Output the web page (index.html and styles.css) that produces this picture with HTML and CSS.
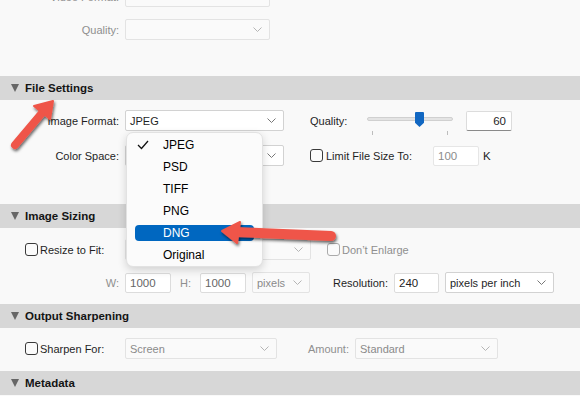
FILE: index.html
```html
<!DOCTYPE html>
<html lang="en">
<head>
    <meta charset="UTF-8">
    <title>Export - File Settings</title>
    <link rel="stylesheet" href="styles.css">
</head>
<body>
    <div class="panel top-part">
        <div class="row">
            <span class="label dim">Video Format:</span>
            <div class="field off w145"><svg class="chev" width="9" height="5"><polyline points="0.5,0.5 4.5,4.5 8.5,0.5"/></svg></div>
        </div>
        <div class="row">
            <span class="label dim">Quality:</span>
            <div class="field off w145"><svg class="chev" width="9" height="5"><polyline points="0.5,0.5 4.5,4.5 8.5,0.5"/></svg></div>
        </div>
    </div>

    <div class="header"><span class="tri"></span>File Settings</div>
    <div class="panel file-settings">
        <div class="row">
            <span class="label">Image Format:</span>
            <div class="field w159">JPEG<svg class="chev" width="9" height="5"><polyline points="0.5,0.5 4.5,4.5 8.5,0.5"/></svg></div>
            <span class="quality-label">Quality:</span>
            <div class="slider">
                <div class="track"></div>
                <div class="thumb"></div>
                <div class="ticks"><span></span><span></span></div>
            </div>
            <div class="input num w46">60</div>
        </div>
        <div class="row">
            <span class="label">Color Space:</span>
            <div class="field w159"><svg class="chev" width="9" height="5"><polyline points="0.5,0.5 4.5,4.5 8.5,0.5"/></svg></div>
            <span class="box limit-box"></span>
            <span class="limit-label">Limit File Size To:</span>
            <div class="input faded w46">100</div>
            <span class="unit">K</span>
        </div>
    </div>

    <div class="header"><span class="tri"></span>Image Sizing</div>
    <div class="panel image-sizing">
        <div class="row">
            <span class="box first-box"></span>
            <span class="check-label">Resize to Fit:</span>
            <div class="field off w186"><svg class="chev" width="9" height="5"><polyline points="0.5,0.5 4.5,4.5 8.5,0.5"/></svg></div>
            <span class="box off enlarge-box"></span>
            <span class="dim">Don’t Enlarge</span>
        </div>
        <div class="row">
            <span class="label dim">W:</span>
            <div class="input grey w46">1000</div>
            <span class="h-label dim">H:</span>
            <div class="input grey w46">1000</div>
            <div class="field off w58 gap6">pixels<svg class="chev" width="9" height="5"><polyline points="0.5,0.5 4.5,4.5 8.5,0.5"/></svg></div>
            <span class="res-label">Resolution:</span>
            <div class="input w45">240</div>
            <div class="field w109 gap6">pixels per inch<svg class="chev" width="9" height="5"><polyline points="0.5,0.5 4.5,4.5 8.5,0.5"/></svg></div>
        </div>
    </div>

    <div class="header"><span class="tri"></span>Output Sharpening</div>
    <div class="panel sharpening">
        <div class="row">
            <span class="box first-box"></span>
            <span class="check-label">Sharpen For:</span>
            <div class="field off w152">Screen<svg class="chev" width="9" height="5"><polyline points="0.5,0.5 4.5,4.5 8.5,0.5"/></svg></div>
            <span class="amount-label dim">Amount:</span>
            <div class="field off w143">Standard<svg class="chev" width="9" height="5"><polyline points="0.5,0.5 4.5,4.5 8.5,0.5"/></svg></div>
        </div>
    </div>

    <div class="header"><span class="tri"></span>Metadata</div>

    <!-- open format list -->
    <div class="menu">
        <div class="item"><span class="mark"><svg width="12" height="10"><polyline points="1,5 4.5,8.5 11,1"/></svg></span>JPEG</div>
        <div class="item"><span class="mark"></span>PSD</div>
        <div class="item"><span class="mark"></span>TIFF</div>
        <div class="item"><span class="mark"></span>PNG</div>
        <div class="item sel"><span class="mark"></span>DNG</div>
        <div class="item"><span class="mark"></span>Original</div>
    </div>

    <!-- callout arrows -->
    <svg class="marks" width="580" height="396">
        <defs>
            <filter id="shadow" x="-30%" y="-30%" width="160%" height="180%">
                <feDropShadow dx="1" dy="2" stdDeviation="1.4" flood-color="#000" flood-opacity="0.6"/>
            </filter>
        </defs>
        <g filter="url(#shadow)" fill="#ef5548" stroke="#ef5548" stroke-linejoin="round">
            <line x1="15" y1="145" x2="42" y2="113" stroke-width="8" stroke-linecap="round"/>
            <polygon points="53,101 50,119 34,106" stroke-width="2"/>
            <line x1="236" y1="232" x2="331" y2="236" stroke-width="10" stroke-linecap="round"/>
            <polygon points="222,231 240,222 237,243" stroke-width="2"/>
        </g>
    </svg>
</body>
</html>
```

FILE: styles.css
```css
* {
    margin: 0;
    padding: 0;
    box-sizing: border-box;
}

body {
    width: 580px;
    height: 396px;
    overflow: hidden;
    position: relative;
    background: #f9f9f9;
    font-family: "Liberation Sans", Arial, sans-serif;
    font-size: 11px;
    color: #1f1f1f;
}

.panel {
    display: flex;
    flex-direction: column;
}

.row {
    display: flex;
    align-items: center;
    height: 21px;
    white-space: nowrap;
}

.dim {
    color: #8f8f8f;
}

.label {
    width: 119px;
    margin-right: 6px;
    text-align: right;
}

/* section headers */
.header {
    height: 24px;
    background: #d7d7d7;
    display: flex;
    align-items: center;
    padding-left: 11px;
    font-weight: bold;
    font-size: 11.5px;
    color: #141414;
}

.tri {
    width: 0;
    height: 0;
    border-left: 4.5px solid transparent;
    border-right: 4.5px solid transparent;
    border-top: 8px solid #666;
    margin-right: 6px;
}

/* drop-down fields */
.field {
    height: 21px;
    display: flex;
    align-items: center;
    padding: 0 7px 0 4px;
    background: #fff;
    border: 1px solid #d2d2d2;
    border-radius: 2px;
}

.field .chev {
    margin-left: auto;
    fill: none;
    stroke: #777;
    stroke-width: 1;
}

.field.off {
    background: #fafafa;
    border-color: #e3e3e3;
    color: #8a8a8a;
}

.field.off .chev {
    stroke: #b5b5b5;
}

.w145 { width: 145px; }
.w159 { width: 159px; }
.w186 { width: 186px; }
.w58 { width: 58px; }
.w109 { width: 109px; }
.w152 { width: 152px; }
.w143 { width: 143px; }
.w46 { width: 46px; }
.w45 { width: 45px; }
.gap6 { margin-left: 6px; }

/* text inputs */
.input {
    height: 20px;
    display: flex;
    align-items: center;
    padding: 0 4px;
    background: #fff;
    border: 1px solid #dcdcdc;
    border-radius: 2px;
    font-size: 11.5px;
}

.input.num {
    justify-content: flex-end;
    padding-right: 5px;
    border-bottom-color: #8a8a8a;
}

.input.faded {
    color: #8c8c8c;
    border-color: #e6e6e6;
}

.input.grey {
    color: #666;
}

/* checkboxes */
.box {
    width: 13px;
    height: 13px;
    border: 1px solid #3a3a3a;
    border-radius: 3px;
    background: #fbfbfb;
}

.box.off {
    border-color: #ababab;
}

.first-box {
    margin-left: 25px;
}

.check-label {
    width: 85px;
    margin-left: 2px;
}

/* file settings */
.top-part {
    margin-top: -14px;
    gap: 12px;
    padding-bottom: 36px;
}

.file-settings {
    padding: 10px 0 38px;
    gap: 14px;
}

.quality-label {
    margin-left: 26px;
    width: 57px;
}

.slider {
    width: 86px;
    height: 21px;
    position: relative;
}

.track {
    margin-top: 7px;
    height: 4px;
    background: #e4e4e4;
    border: 1px solid #d0d0d0;
    border-radius: 2px;
}

.thumb {
    position: absolute;
    left: 48px;
    top: 2px;
    width: 9px;
    height: 15px;
    background: #1167c2;
    clip-path: polygon(0 0, 100% 0, 100% 72%, 50% 100%, 0 72%);
    border-radius: 1px;
}

.ticks {
    display: flex;
    justify-content: space-between;
    padding: 0 5px;
    margin-top: 10px;
}

.ticks span {
    width: 1px;
    height: 4px;
    background: #bdbdbd;
}

.input.w46:last-child {
    margin-left: 13px;
}

.limit-box {
    margin-left: 26px;
}

.limit-label {
    width: 107px;
    margin-left: 3px;
}

.unit {
    margin-left: 4px;
    font-size: 11.5px;
}

/* image sizing */
.image-sizing {
    padding: 11px 0;
    gap: 12px;
}

.enlarge-box {
    margin-left: 16px;
    margin-right: 2px;
}

.h-label {
    margin-left: 9px;
    width: 20px;
}

.res-label {
    margin-left: 23px;
    width: 61px;
}

/* sharpening */
.sharpening {
    padding: 10px 0 12px;
}

.amount-label {
    margin-left: 31px;
    width: 47px;
}

/* open format menu */
.menu {
    position: absolute;
    left: 126px;
    top: 132px;
    width: 137px;
    height: 135px;
    padding: 4px 8px 0;
    display: flex;
    flex-direction: column;
    gap: 6px;
    background: #fbfbfb;
    border: 1px solid #e2e2e2;
    border-radius: 7px;
    box-shadow: 0 3px 8px rgba(0, 0, 0, 0.16);
    font-size: 12px;
    color: #000;
}

.item {
    height: 16px;
    display: flex;
    align-items: center;
    border-radius: 4px;
}

.item .mark {
    width: 28px;
    padding-left: 2px;
    display: flex;
}

.item .mark polyline {
    fill: none;
    stroke: #111;
    stroke-width: 1.3;
}

.item.sel {
    background: #0067c0;
    color: #fff;
}

.marks {
    position: absolute;
    left: 0;
    top: 0;
    pointer-events: none;
}
```
